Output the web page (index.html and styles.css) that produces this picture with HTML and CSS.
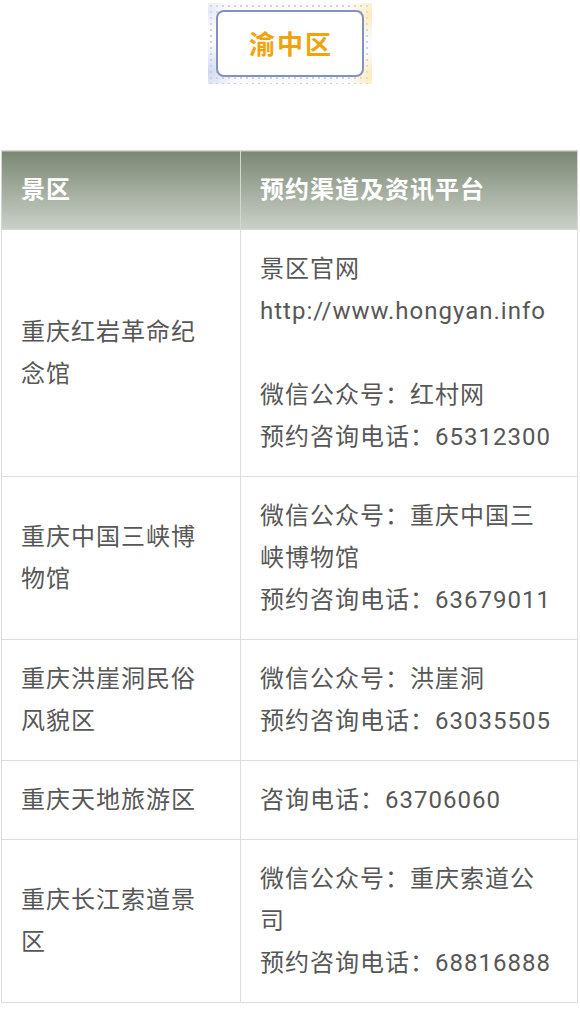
FILE: index.html
```html
<!DOCTYPE html>
<html lang="zh-CN">
<head>
<meta charset="utf-8">
<title>渝中区</title>
<link rel="stylesheet" href="styles.css">
</head>
<body>
<div class="page">
  <div class="badge-wrap">
    <div class="badge">
      <div class="badge-inner">渝中区</div>
    </div>
  </div>
  <table class="spots">
    <colgroup><col class="c1"><col class="c2"></colgroup>
    <thead>
      <tr><th>景区</th><th>预约渠道及资讯平台</th></tr>
    </thead>
    <tbody>
      <tr>
        <td>重庆红岩革命纪念馆</td>
        <td>景区官网<br>http://www.hongyan.info<br><br>微信公众号：红村网<br>预约咨询电话：65312300</td>
      </tr>
      <tr>
        <td>重庆中国三峡博物馆</td>
        <td>微信公众号：重庆中国三峡博物馆<br>预约咨询电话：63679011</td>
      </tr>
      <tr>
        <td>重庆洪崖洞民俗风貌区</td>
        <td>微信公众号：洪崖洞<br>预约咨询电话：63035505</td>
      </tr>
      <tr>
        <td>重庆天地旅游区</td>
        <td>咨询电话：63706060</td>
      </tr>
      <tr>
        <td>重庆长江索道景区</td>
        <td>微信公众号：重庆索道公司<br>预约咨询电话：68816888</td>
      </tr>
    </tbody>
  </table>
</div>
</body>
</html>
```
FILE: styles.css
```css
html, body {
  margin: 0;
  padding: 0;
  background: #ffffff;
}
body {
  font-family: Roboto, "Noto Sans CJK SC", sans-serif;
  color: #555555;
}
.page {
  width: 580px;
}
.badge-wrap {
  display: flex;
  justify-content: center;
  padding-top: 3px;
}
.badge {
  width: 164px;
  height: 81px;
  box-sizing: border-box;
  padding: 7px 8px;
  background:
    radial-gradient(circle at 0% 85%, rgba(196, 206, 236, 0.75) 0, rgba(196, 206, 236, 0) 28px),
    radial-gradient(circle at 100% 15%, rgba(250, 232, 170, 0.8) 0, rgba(250, 232, 170, 0) 24px),
    radial-gradient(circle at 100% 90%, rgba(250, 232, 170, 0.8) 0, rgba(250, 232, 170, 0) 24px),
    radial-gradient(circle at 0% 10%, rgba(220, 226, 244, 0.7) 0, rgba(220, 226, 244, 0) 20px),
    radial-gradient(circle, #ccd1e6 1px, rgba(255, 255, 255, 0) 1.3px) 0 0 / 6px 6px,
    #fbfbfd;
}
.badge-inner {
  height: 100%;
  box-sizing: border-box;
  border: 2px solid #8391bd;
  border-radius: 8px;
  background: #ffffff;
  display: flex;
  align-items: center;
  justify-content: center;
  color: #f1a30d;
  font-weight: 700;
  font-size: 26px;
  letter-spacing: 2px;
  padding: 0 0 3px 2px;
}
.spots {
  margin-top: 66px;
  margin-left: 1px;
  width: 576px;
  border-collapse: collapse;
  table-layout: fixed;
}
.c1 { width: 239px; }
.c2 { width: 337px; }
.spots th,
.spots td {
  border: 1px solid #dcdcdc;
  padding: 18px 19px 18px 19px;
  font-size: 24px;
  line-height: 42px;
  letter-spacing: 1px;
  vertical-align: middle;
  text-align: left;
  word-break: break-all;
}
.spots td:first-child {
  padding-right: 26px;
}
.spots th {
  background: linear-gradient(#7a8873, #cbd1c8);
  color: #ffffff;
  font-weight: 700;
  border-color: #d4d8d2;
}
.spots td {
  color: #575757;
}
```
